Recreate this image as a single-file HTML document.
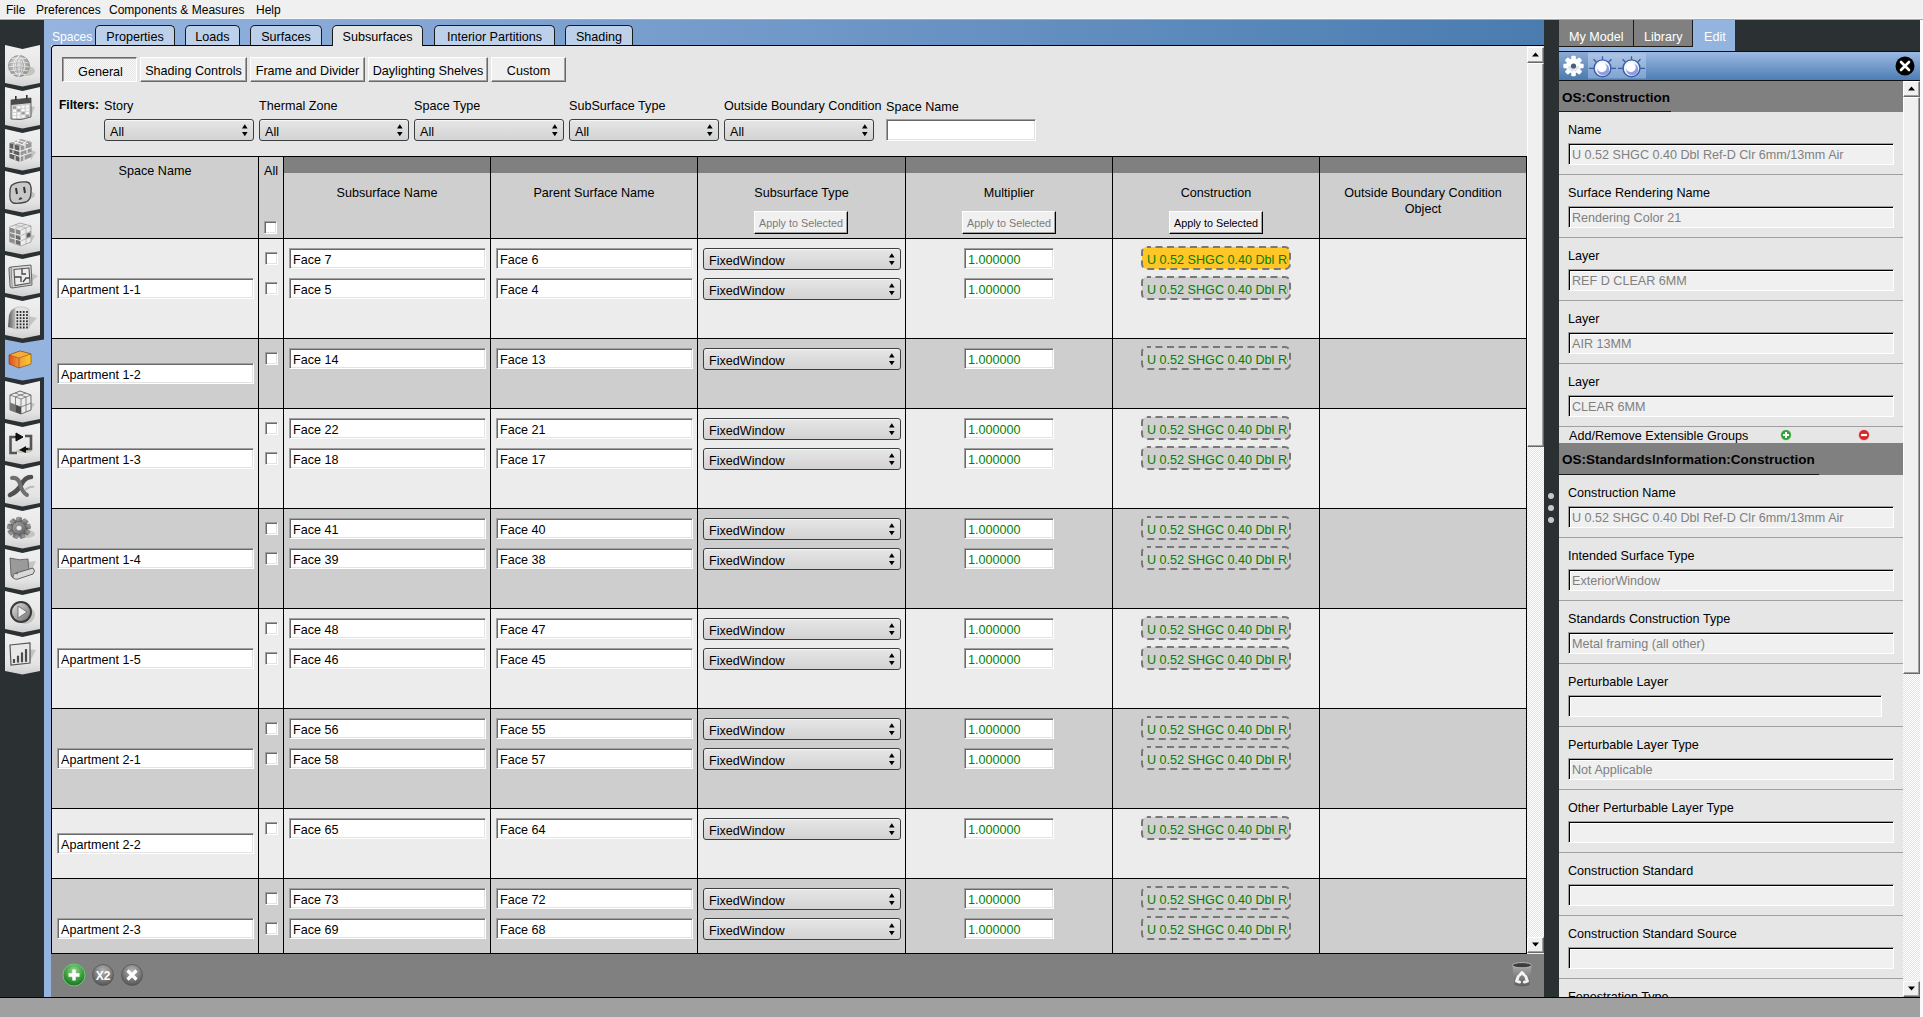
<!DOCTYPE html>
<html><head><meta charset="utf-8"><style>
html,body{margin:0;padding:0;}
body{width:1923px;height:1017px;overflow:hidden;position:relative;background:#f0f0f0;font-family:"Liberation Sans", sans-serif;font-size:12.6px;color:#000;}
.r,.t{position:absolute;}
.t{white-space:nowrap;}
.btn{background:#f0f0f0;border-top:1px solid #fff;border-left:1px solid #fff;border-right:1px solid #696969;border-bottom:1px solid #696969;box-shadow:inset -1px -1px 0 #a0a0a0;box-sizing:border-box;}
.btnp{background-color:#f8f8f8;background-image:linear-gradient(45deg,#e6e6e6 25%,transparent 25%,transparent 75%,#e6e6e6 75%),linear-gradient(45deg,#e6e6e6 25%,transparent 25%,transparent 75%,#e6e6e6 75%);background-size:2px 2px;background-position:0 0,1px 1px;border-top:1px solid #696969;border-left:1px solid #696969;border-right:1px solid #fff;border-bottom:1px solid #fff;box-shadow:inset 1px 1px 0 #a0a0a0;box-sizing:border-box;}
.combo{background:linear-gradient(#e6e6e6,#d3d3d3);border:1px solid #3a3f41;border-radius:3px;box-sizing:border-box;box-shadow:inset 0 1px 0 #f6f6f6;}
.edit{background:#fff;border-top:1px solid #a0a0a0;border-left:1px solid #a0a0a0;border-right:1px solid #fff;border-bottom:1px solid #fff;box-shadow:inset 1px 1px 0 #696969,inset -1px -1px 0 #e3e3e3;box-sizing:border-box;}
.chk{background:#fff;border-top:1px solid #a0a0a0;border-left:1px solid #a0a0a0;border-right:1px solid #fff;border-bottom:1px solid #fff;box-shadow:inset 1px 1px 0 #696969,inset -1px -1px 0 #e3e3e3;box-sizing:border-box;}
.cbtn{border:2px solid transparent;box-sizing:border-box;overflow:hidden;color:#008000;font-size:12.6px;line-height:24px;padding-left:4px;white-space:nowrap;}
.cbtn span{display:block;width:141px;overflow:hidden;}
.cbtn.sel{background:#ffc726;}
.pedit{background:#f0f0f0;border-top:1px solid #a0a0a0;border-left:1px solid #a0a0a0;border-right:1px solid #fff;border-bottom:1px solid #fff;box-shadow:inset 1px 1px 0 #000,inset 2px 2px 0 #fff;box-sizing:border-box;}
.sbbtn{background:#f0f0f0;border-top:1px solid #fff;border-left:1px solid #fff;border-right:1px solid #696969;border-bottom:1px solid #696969;box-shadow:inset -1px -1px 0 #a0a0a0;box-sizing:border-box;}
.dith{background-color:#fff;background-image:linear-gradient(45deg,#e3e3e3 25%,transparent 25%,transparent 75%,#e3e3e3 75%),linear-gradient(45deg,#e3e3e3 25%,transparent 25%,transparent 75%,#e3e3e3 75%);background-size:2px 2px;background-position:0 0,1px 1px;}
</style></head><body>
<div class="r" style="left:0px;top:0px;width:1923px;height:20px;background:#f0f0f0;"></div>
<div class="r" style="left:0px;top:18px;width:1923px;height:1px;background:#f8f8f8;"></div>
<div class="r" style="left:0px;top:19px;width:1923px;height:1px;background:#aaa6a2;"></div>
<div class="t" style="left:6px;top:3.44px;font-size:12px;line-height:14px;color:#000;">File</div>
<div class="t" style="left:36px;top:3.44px;font-size:12px;line-height:14px;color:#000;">Preferences</div>
<div class="t" style="left:109px;top:3.44px;font-size:12px;line-height:14px;color:#000;">Components &amp; Measures</div>
<div class="t" style="left:256px;top:3.44px;font-size:12px;line-height:14px;color:#000;">Help</div>
<div class="r" style="left:0px;top:997px;width:1923px;height:1px;background:#000;"></div>
<div class="r" style="left:0px;top:998px;width:1923px;height:19px;background:#a0a0a0;"></div>
<div class="r" style="left:0px;top:20px;width:44px;height:977px;background:#2b3033;"></div>
<div class="r" style="left:44px;top:20px;width:7px;height:977px;background:#94b3df;"></div>
<svg class="r" style="left:0;top:20px" width="51" height="977" viewBox="0 20 51 977"><defs><linearGradient id="tabg" x1="0" y1="0" x2="0" y2="1"><stop offset="0" stop-color="#f0f0f0"/><stop offset="0.75" stop-color="#e4e4e4"/><stop offset="1" stop-color="#cfcfcf"/></linearGradient><linearGradient id="orng" x1="0" x2="1"><stop offset="0" stop-color="#e64a12"/><stop offset="0.5" stop-color="#f0a040"/><stop offset="1" stop-color="#ffc820"/></linearGradient><radialGradient id="glb" cx="40%" cy="35%" r="70%"><stop offset="0" stop-color="#d8d8d8"/><stop offset="1" stop-color="#8c8c8c"/></radialGradient></defs><path d="M5 45L22.5 49L40 45V83L22.5 86.5L5 83Z" fill="url(#tabg)"/><path d="M5 87L22.5 91L40 87V125L22.5 128.5L5 125Z" fill="url(#tabg)"/><path d="M5 129L22.5 133L40 129V167L22.5 170.5L5 167Z" fill="url(#tabg)"/><path d="M5 171L22.5 175L40 171V209L22.5 212.5L5 209Z" fill="url(#tabg)"/><path d="M5 213L22.5 217L40 213V251L22.5 254.5L5 251Z" fill="url(#tabg)"/><path d="M5 255L22.5 259L40 255V293L22.5 296.5L5 293Z" fill="url(#tabg)"/><path d="M5 297L22.5 301L40 297V335L22.5 338.5L5 335Z" fill="url(#tabg)"/><path d="M5 339.5L22.5 343L44 339.5V377L22.5 380.5L5 377Z" fill="#94b3df"/><path d="M5 381L22.5 385L40 381V419L22.5 422.5L5 419Z" fill="url(#tabg)"/><path d="M5 423L22.5 427L40 423V461L22.5 464.5L5 461Z" fill="url(#tabg)"/><path d="M5 465L22.5 469L40 465V503L22.5 506.5L5 503Z" fill="url(#tabg)"/><path d="M5 507L22.5 511L40 507V545L22.5 548.5L5 545Z" fill="url(#tabg)"/><path d="M5 549L22.5 553L40 549V587L22.5 590.5L5 587Z" fill="url(#tabg)"/><path d="M5 591L22.5 595L40 591V629L22.5 632.5L5 629Z" fill="url(#tabg)"/><path d="M5 633L22.5 637L40 633V671L22.5 674.5L5 671Z" fill="url(#tabg)"/><ellipse cx="27" cy="71" rx="8" ry="5" fill="#c2c6bd"/><circle cx="19" cy="66" r="10.5" fill="url(#glb)" stroke="#8e8e8e" stroke-width="0.9"/><path d="M9.5 63Q19 61 28.5 63M8.6 67Q19 65 29.4 67M9.5 71Q19 69 28.5 71M12 58.5Q19 57 26 58.5M12 74.5Q19 73 26 74.5M19 55.5V76.5M19 55.5Q12 66 19 76.5M19 55.5Q26 66 19 76.5M19 55.5Q7 66 19 76.5M19 55.5Q31 66 19 76.5" stroke="#f2f2f2" stroke-width="0.9" fill="none"/><path d="M9.5 63Q19 61 28.5 63M8.6 67Q19 65 29.4 67M9.5 71Q19 69 28.5 71M19 55.5Q12 66 19 76.5M19 55.5Q26 66 19 76.5" stroke="#8a8a8a" stroke-width="0.4" fill="none" transform="translate(0.6,0.6)"/><path d="M29 106L35 107L30 118Z" fill="#c2c6bd"/><path d="M11 100L31 98V117Q21 121 11 119Z" fill="#d0d0d0" stroke="#555" stroke-width="0.9"/><path d="M11 100L31 98V103L11 105Z" fill="#4a4a4a"/><rect x="15" y="96" width="1.6" height="4" fill="#333"/><rect x="26" y="95" width="1.6" height="4" fill="#333"/><rect x="13.0" y="106.5" width="3" height="2.2" fill="#9a9a9a"/><rect x="13.0" y="109.7" width="3" height="2.2" fill="#fafafa"/><rect x="13.0" y="112.9" width="3" height="2.2" fill="#fafafa"/><rect x="13.0" y="116.1" width="3" height="2.2" fill="#fafafa"/><rect x="17.3" y="106.1" width="3" height="2.2" fill="#fafafa"/><rect x="17.3" y="109.3" width="3" height="2.2" fill="#9a9a9a"/><rect x="17.3" y="112.5" width="3" height="2.2" fill="#fafafa"/><rect x="17.3" y="115.69999999999999" width="3" height="2.2" fill="#fafafa"/><rect x="21.6" y="105.7" width="3" height="2.2" fill="#fafafa"/><rect x="21.6" y="108.9" width="3" height="2.2" fill="#fafafa"/><rect x="21.6" y="112.10000000000001" width="3" height="2.2" fill="#9a9a9a"/><rect x="21.6" y="115.3" width="3" height="2.2" fill="#fafafa"/><rect x="25.9" y="105.3" width="3" height="2.2" fill="#fafafa"/><rect x="25.9" y="108.5" width="3" height="2.2" fill="#fafafa"/><rect x="25.9" y="111.7" width="3" height="2.2" fill="#fafafa"/><rect x="25.9" y="114.89999999999999" width="3" height="2.2" fill="#9a9a9a"/><path d="M31 150L36 152L31 160Z" fill="#c2c6bd"/><path d="M9.5 143L21 139L31.5 142L20 146Z" fill="#a0a0a0"/><path d="M9.5 143L20 146V162L9.5 158Z" fill="#5e5e5e"/><path d="M20 146L31.5 142V157L20 162Z" fill="#979797"/><path d="M9.5 148.5L20 151.5L31.5 147.5M9.5 153L20 156.5L31.5 152.5M20 146V162M14 144.5V149.5M13 150.5V155M15 154.5V160M25 144V149M27 148V153M24 153.5V160.5M13 141.5L24.5 145.5M17 140L28 143.5M15 144L19 140.5M23 144.5L26.5 141" stroke="#f4f4f4" stroke-width="1.1" fill="none"/><ellipse cx="28" cy="195" rx="7" ry="4" fill="#c2c6bd"/><path d="M12 185Q18 181 27 182Q32 183 31 192Q31 200 26 202Q18 204 13 203Q9 201 10 192Q10 187 12 185Z" fill="#c8c8c8" stroke="#444" stroke-width="1.3"/><path d="M16 188L17 194M24 187L25 193" stroke="#333" stroke-width="2"/><path d="M18.5 200Q20 195 22.5 199Z" fill="#333"/><path d="M30 234L35 236L30 244Z" fill="#c2c6bd"/><path d="M9.5 227L20 223L31 226L21 230Z" fill="#e6e6e6"/><path d="M9.5 227L21 230V246L9.5 242Z" fill="#8a8a8a"/><path d="M21 230L31 226V242L21 246Z" fill="#ececec"/><path d="M26 233L31 231V237L26 239Z" fill="#5a5a5a"/><path d="M15.2 235.5L21 237.3V246L15.2 244Z" fill="#6a6a6a"/><path d="M9.5 227L20 223L31 226V242L21 246L9.5 242ZM9.5 227L21 230L31 226M21 230V246M15.2 228.5V244M26 228V244M9.5 232.5L21 235.5L31 231.5M9.5 237.5L21 240.8L31 236.8M15 225L26 228M25.5 224.5L15 228.5" stroke="#f8f8f8" stroke-width="0.9" fill="none"/><path d="M26 228V244M21 235.5L31 231.5M21 240.8L31 236.8M15 225L26 228M25.5 224.5L15 228.5M21 230L31 226" stroke="#a8a8a8" stroke-width="0.8" fill="none"/><path d="M9.5 227L20 223L31 226V242L21 246L9.5 242Z" stroke="#777" stroke-width="0.6" fill="none"/><path d="M31 273L38 276L31 282Z" fill="#c2c6bd"/><path d="M11 267L31 265L32 285L12 288Z" fill="#d8d8d8" stroke="#666" stroke-width="1"/><path d="M11 267Q8 267 9 270L10 286Q10 288 12 288" fill="#bdbdbd" stroke="#666" stroke-width="1"/><path d="M14 269.5L29 268L30 283L15 285.5Z" fill="#ececec" stroke="#555" stroke-width="1.1"/><path d="M22 268.5V274H26M15 277H21V282M30 278H26L23 282" stroke="#444" stroke-width="1.3" fill="none"/><path d="M28 316L37 318L28 328Z" fill="#c2c6bd"/><defs><linearGradient id="bld" x1="0" x2="1"><stop offset="0" stop-color="#5a5a5a"/><stop offset="1" stop-color="#b8b8b8"/></linearGradient></defs><path d="M9 315Q11 309 15 308L15 329L8 327Z" fill="url(#bld)"/><path d="M15 308Q21 305 29 309V328L15 329Z" fill="#e2e2e2" stroke="#aaa" stroke-width="0.5"/><rect x="16.5" y="311.0" width="1.7" height="1.9" fill="#2a2a2a"/><rect x="16.5" y="314.1" width="1.7" height="1.9" fill="#2a2a2a"/><rect x="16.5" y="317.2" width="1.7" height="1.9" fill="#2a2a2a"/><rect x="16.5" y="320.3" width="1.7" height="1.9" fill="#2a2a2a"/><rect x="16.5" y="323.4" width="1.7" height="1.9" fill="#2a2a2a"/><rect x="16.5" y="326.5" width="1.7" height="1.9" fill="#2a2a2a"/><rect x="19.7" y="311.0" width="1.7" height="1.9" fill="#2a2a2a"/><rect x="19.7" y="314.1" width="1.7" height="1.9" fill="#2a2a2a"/><rect x="19.7" y="317.2" width="1.7" height="1.9" fill="#2a2a2a"/><rect x="19.7" y="320.3" width="1.7" height="1.9" fill="#2a2a2a"/><rect x="19.7" y="323.4" width="1.7" height="1.9" fill="#2a2a2a"/><rect x="19.7" y="326.5" width="1.7" height="1.9" fill="#2a2a2a"/><rect x="22.9" y="311.0" width="1.7" height="1.9" fill="#2a2a2a"/><rect x="22.9" y="314.1" width="1.7" height="1.9" fill="#2a2a2a"/><rect x="22.9" y="317.2" width="1.7" height="1.9" fill="#2a2a2a"/><rect x="22.9" y="320.3" width="1.7" height="1.9" fill="#2a2a2a"/><rect x="22.9" y="323.4" width="1.7" height="1.9" fill="#2a2a2a"/><rect x="22.9" y="326.5" width="1.7" height="1.9" fill="#2a2a2a"/><rect x="26.1" y="311.0" width="1.7" height="1.9" fill="#2a2a2a"/><rect x="26.1" y="314.1" width="1.7" height="1.9" fill="#2a2a2a"/><rect x="26.1" y="317.2" width="1.7" height="1.9" fill="#2a2a2a"/><rect x="26.1" y="320.3" width="1.7" height="1.9" fill="#2a2a2a"/><rect x="26.1" y="323.4" width="1.7" height="1.9" fill="#2a2a2a"/><rect x="26.1" y="326.5" width="1.7" height="1.9" fill="#2a2a2a"/><path d="M27 359L32 361L28 366Z" fill="#7f9cc8"/><path d="M9 355L20 351L31 354V364L19 368L9 364Z" fill="url(#orng)" stroke="#7a4010" stroke-width="0.6"/><path d="M9 355L19 358L31 354L20 351Z" fill="#f5ac3a" stroke="#7a4010" stroke-width="0.5"/><path d="M19 358V368" stroke="#8a4a18" stroke-width="0.7"/><path d="M29 402L35 404L29 412Z" fill="#c2c6bd"/><path d="M10 395L20 391L31 395V410L21 414L10 410Z" fill="#ececec" stroke="#606060" stroke-width="0.9"/><path d="M10 395L21 399L31 395M21 399V414M15.5 397V412M26 397V412M10 403L21 407L31 403M15 393L26 397M26 393L15 397" stroke="#707070" stroke-width="0.8" fill="none"/><path d="M15.5 405L21 407V414L15.5 412Z" fill="#4a4a4a"/><path d="M10 403L15.5 405V412L10 410Z" fill="#777"/><ellipse cx="24" cy="451" rx="8" ry="2" fill="#c2c6bd"/><path d="M16 437H10.5V453H17" stroke="#555" stroke-width="2.6" fill="none"/><path d="M25 436H31V449H25" stroke="#555" stroke-width="2.6" fill="none"/><path d="M15 437H18M16 433L23 437L16 441Z" fill="#111" stroke="#111" stroke-width="1"/><path d="M26 453L19 450L26 446Z" fill="#111"/><path d="M25 449H28" stroke="#111" stroke-width="2"/><path d="M25 490Q30 486 34 487" stroke="#b8bcb4" stroke-width="2" fill="none"/><path d="M10 495Q17 492 21 485Q25 477 31 477" stroke="#505050" stroke-width="4.6" fill="none" stroke-linecap="round"/><path d="M12 478Q18 477 20 484Q22 492 27 495" stroke="#707070" stroke-width="4" fill="none" stroke-linecap="round"/><ellipse cx="27" cy="534" rx="8" ry="4" fill="#c2c6bd"/><defs><linearGradient id="gearg" x1="0" y1="0" x2="1" y2="1"><stop offset="0" stop-color="#b0b0b0"/><stop offset="1" stop-color="#5a5a5a"/></linearGradient></defs><g transform="translate(19,528) scale(1,0.92)" fill="url(#gearg)" stroke="#555" stroke-width="0.5"><circle r="8.5"/><rect x="-2.6" y="-11.5" width="5.2" height="5" rx="1" transform="rotate(0)"/><rect x="-2.6" y="-11.5" width="5.2" height="5" rx="1" transform="rotate(40)"/><rect x="-2.6" y="-11.5" width="5.2" height="5" rx="1" transform="rotate(80)"/><rect x="-2.6" y="-11.5" width="5.2" height="5" rx="1" transform="rotate(120)"/><rect x="-2.6" y="-11.5" width="5.2" height="5" rx="1" transform="rotate(160)"/><rect x="-2.6" y="-11.5" width="5.2" height="5" rx="1" transform="rotate(200)"/><rect x="-2.6" y="-11.5" width="5.2" height="5" rx="1" transform="rotate(240)"/><rect x="-2.6" y="-11.5" width="5.2" height="5" rx="1" transform="rotate(280)"/><rect x="-2.6" y="-11.5" width="5.2" height="5" rx="1" transform="rotate(320)"/><circle r="3" fill="#e8e8e8"/></g><path d="M28 562L36 561L30 574Z" fill="#c2c6bd"/><path d="M10 558Q20 561 28 559L29 572Q22 574 16 578Q12 579 11 575Z" fill="#9a9a9a" stroke="#555" stroke-width="0.8"/><path d="M16 573L33 568Q36 571 33 574L18 579Q13 580 13 576Q14 572 18 574" fill="#d8d8d8" stroke="#555" stroke-width="0.9"/><ellipse cx="25" cy="615" rx="10" ry="9" fill="#c2c6bd"/><defs><linearGradient id="playg" x1="0" y1="0" x2="1" y2="1"><stop offset="0" stop-color="#e0e0e0"/><stop offset="1" stop-color="#707070"/></linearGradient></defs><circle cx="21" cy="612" r="11" fill="#3a3a3a"/><circle cx="21" cy="612" r="9" fill="url(#playg)"/><path d="M18 606L27 612L18 618Z" fill="#f0f0f0" stroke="#666" stroke-width="0.8"/><path d="M28 649L36 650L29 663Z" fill="#c2c6bd"/><path d="M10 645L30 643V663L11 665Z" fill="#e8e8e8" stroke="#555" stroke-width="1.2"/><path d="M14 663.0V659.0" stroke="#4a4a4a" stroke-width="2.2"/><path d="M18 662.6V655.7" stroke="#4a4a4a" stroke-width="2.2"/><path d="M22 662.2V652.4" stroke="#4a4a4a" stroke-width="2.2"/><path d="M26 661.8V649.1" stroke="#4a4a4a" stroke-width="2.2"/></svg>
<div class="r" style="left:44px;top:20px;width:1500px;height:25px;background:linear-gradient(to right,#96b4e0,#4a7cb0);"></div>
<div class="t" style="left:52px;top:29.91px;font-size:12.1px;line-height:15px;color:#fff;">Spaces</div>
<div class="r" style="left:51px;top:45px;width:1493px;height:908px;background:#e6e6e6;border-top:1px solid #000;border-left:1px solid #000;border-top-left-radius:4px;box-sizing:border-box;"></div>
<div class="r" style="left:95px;top:25px;width:80px;height:20px;background:#bdd0ea;border:1px solid #1a1a1a;border-bottom:none;border-radius:5px 5px 0 0;box-sizing:border-box;"></div>
<div class="t" style="left:95px;top:29.73px;font-size:12.6px;line-height:15px;color:#000;width:80px;text-align:center;">Properties</div>
<div class="r" style="left:185px;top:25px;width:55px;height:20px;background:#bdd0ea;border:1px solid #1a1a1a;border-bottom:none;border-radius:5px 5px 0 0;box-sizing:border-box;"></div>
<div class="t" style="left:185px;top:29.73px;font-size:12.6px;line-height:15px;color:#000;width:55px;text-align:center;">Loads</div>
<div class="r" style="left:250px;top:25px;width:72px;height:20px;background:#bdd0ea;border:1px solid #1a1a1a;border-bottom:none;border-radius:5px 5px 0 0;box-sizing:border-box;"></div>
<div class="t" style="left:250px;top:29.73px;font-size:12.6px;line-height:15px;color:#000;width:72px;text-align:center;">Surfaces</div>
<div class="r" style="left:332px;top:25px;width:91px;height:21px;background:#e6e6e6;border:1px solid #1a1a1a;border-bottom:none;border-radius:5px 5px 0 0;box-sizing:border-box;"></div>
<div class="t" style="left:332px;top:29.73px;font-size:12.6px;line-height:15px;color:#000;width:91px;text-align:center;">Subsurfaces</div>
<div class="r" style="left:434px;top:25px;width:121px;height:20px;background:#bdd0ea;border:1px solid #1a1a1a;border-bottom:none;border-radius:5px 5px 0 0;box-sizing:border-box;"></div>
<div class="t" style="left:434px;top:29.73px;font-size:12.6px;line-height:15px;color:#000;width:121px;text-align:center;">Interior Partitions</div>
<div class="r" style="left:565px;top:25px;width:68px;height:20px;background:#bdd0ea;border:1px solid #1a1a1a;border-bottom:none;border-radius:5px 5px 0 0;box-sizing:border-box;"></div>
<div class="t" style="left:565px;top:29.73px;font-size:12.6px;line-height:15px;color:#000;width:68px;text-align:center;">Shading</div>
<div class="r btnp" style="left:62px;top:57px;width:75px;height:25px;"></div>
<div class="t" style="left:63px;top:64.73px;font-size:12.6px;line-height:15px;color:#000;width:75px;text-align:center;">General</div>
<div class="r btn" style="left:140px;top:57px;width:107px;height:25px;"></div>
<div class="t" style="left:140px;top:63.73px;font-size:12.6px;line-height:15px;color:#000;width:107px;text-align:center;">Shading Controls</div>
<div class="r btn" style="left:250px;top:57px;width:115px;height:25px;"></div>
<div class="t" style="left:250px;top:63.73px;font-size:12.6px;line-height:15px;color:#000;width:115px;text-align:center;">Frame and Divider</div>
<div class="r btn" style="left:368px;top:57px;width:120px;height:25px;"></div>
<div class="t" style="left:368px;top:63.73px;font-size:12.6px;line-height:15px;color:#000;width:120px;text-align:center;">Daylighting Shelves</div>
<div class="r btn" style="left:491px;top:57px;width:75px;height:25px;"></div>
<div class="t" style="left:491px;top:63.73px;font-size:12.6px;line-height:15px;color:#000;width:75px;text-align:center;">Custom</div>
<div class="t" style="left:59px;top:98.44px;font-size:12px;line-height:14px;color:#000;font-weight:bold;">Filters:</div>
<div class="t" style="left:104px;top:98.73px;font-size:12.6px;line-height:15px;color:#000;">Story</div>
<div class="r combo" style="left:104px;top:119px;width:150px;height:22px;"></div>
<div class="t" style="left:110px;top:124.73px;font-size:12.6px;line-height:15px;color:#000;">All</div>
<svg class="r" style="left:240px;top:123px" width="9" height="14"><path d="M4.8 1.2L7.6 5.6H2Z M2 9H7.6L4.8 13.2Z" fill="#000"/></svg>
<div class="t" style="left:259px;top:98.73px;font-size:12.6px;line-height:15px;color:#000;">Thermal Zone</div>
<div class="r combo" style="left:259px;top:119px;width:150px;height:22px;"></div>
<div class="t" style="left:265px;top:124.73px;font-size:12.6px;line-height:15px;color:#000;">All</div>
<svg class="r" style="left:395px;top:123px" width="9" height="14"><path d="M4.8 1.2L7.6 5.6H2Z M2 9H7.6L4.8 13.2Z" fill="#000"/></svg>
<div class="t" style="left:414px;top:98.73px;font-size:12.6px;line-height:15px;color:#000;">Space Type</div>
<div class="r combo" style="left:414px;top:119px;width:150px;height:22px;"></div>
<div class="t" style="left:420px;top:124.73px;font-size:12.6px;line-height:15px;color:#000;">All</div>
<svg class="r" style="left:550px;top:123px" width="9" height="14"><path d="M4.8 1.2L7.6 5.6H2Z M2 9H7.6L4.8 13.2Z" fill="#000"/></svg>
<div class="t" style="left:569px;top:98.73px;font-size:12.6px;line-height:15px;color:#000;">SubSurface Type</div>
<div class="r combo" style="left:569px;top:119px;width:150px;height:22px;"></div>
<div class="t" style="left:575px;top:124.73px;font-size:12.6px;line-height:15px;color:#000;">All</div>
<svg class="r" style="left:705px;top:123px" width="9" height="14"><path d="M4.8 1.2L7.6 5.6H2Z M2 9H7.6L4.8 13.2Z" fill="#000"/></svg>
<div class="t" style="left:724px;top:98.73px;font-size:12.6px;line-height:15px;color:#000;">Outside Boundary Condition</div>
<div class="r combo" style="left:724px;top:119px;width:150px;height:22px;"></div>
<div class="t" style="left:730px;top:124.73px;font-size:12.6px;line-height:15px;color:#000;">All</div>
<svg class="r" style="left:860px;top:123px" width="9" height="14"><path d="M4.8 1.2L7.6 5.6H2Z M2 9H7.6L4.8 13.2Z" fill="#000"/></svg>
<div class="t" style="left:886px;top:99.73px;font-size:12.6px;line-height:15px;color:#000;">Space Name</div>
<div class="r edit" style="left:886px;top:119px;width:150px;height:22px;"></div>
<div class="r" style="left:52px;top:157px;width:1474px;height:81px;background:#cfcfcf;"></div>
<div class="r" style="left:284px;top:157px;width:1242px;height:16px;background:#808080;"></div>
<div class="t" style="left:52px;top:163.73px;font-size:12.6px;line-height:15px;color:#000;width:206px;text-align:center;">Space Name</div>
<div class="t" style="left:264px;top:163.73px;font-size:12.6px;line-height:15px;color:#000;">All</div>
<div class="r chk" style="left:264px;top:221px;width:13px;height:13px;"></div>
<div class="t" style="left:284px;top:185.73px;font-size:12.6px;line-height:15px;color:#000;width:206px;text-align:center;">Subsurface Name</div>
<div class="t" style="left:491px;top:185.73px;font-size:12.6px;line-height:15px;color:#000;width:206px;text-align:center;">Parent Surface Name</div>
<div class="t" style="left:698px;top:185.73px;font-size:12.6px;line-height:15px;color:#000;width:207px;text-align:center;">Subsurface Type</div>
<div class="t" style="left:906px;top:185.73px;font-size:12.6px;line-height:15px;color:#000;width:206px;text-align:center;">Multiplier</div>
<div class="t" style="left:1113px;top:185.73px;font-size:12.6px;line-height:15px;color:#000;width:206px;text-align:center;">Construction</div>
<div class="t" style="left:1320px;top:185.73px;font-size:12.6px;line-height:15px;color:#000;width:206px;text-align:center;">Outside Boundary Condition</div>
<div class="t" style="left:1320px;top:201.73px;font-size:12.6px;line-height:15px;color:#000;width:206px;text-align:center;">Object</div>
<div class="r btn" style="left:754px;top:211px;width:94px;height:23px;border-right-color:#000;border-bottom-color:#000;"></div>
<div class="t" style="left:754px;top:217.36px;font-size:10.8px;line-height:13px;color:#7a7a7a;width:94px;text-align:center;">Apply to Selected</div>
<div class="r btn" style="left:962px;top:211px;width:94px;height:23px;border-right-color:#000;border-bottom-color:#000;"></div>
<div class="t" style="left:962px;top:217.36px;font-size:10.8px;line-height:13px;color:#7a7a7a;width:94px;text-align:center;">Apply to Selected</div>
<div class="r btn" style="left:1169px;top:211px;width:94px;height:23px;border-right-color:#000;border-bottom-color:#000;"></div>
<div class="t" style="left:1169px;top:217.36px;font-size:10.8px;line-height:13px;color:#000;width:94px;text-align:center;">Apply to Selected</div>
<div class="r" style="left:52px;top:239px;width:1474px;height:99px;background:#ececec;"></div>
<div class="r edit" style="left:57px;top:278px;width:197px;height:21px;"></div>
<div class="t" style="left:61px;top:282.73px;font-size:12.6px;line-height:15px;color:#000;">Apartment 1-1</div>
<div class="r chk" style="left:265px;top:252px;width:13px;height:13px;"></div>
<div class="r edit" style="left:289px;top:248px;width:197px;height:21px;"></div>
<div class="t" style="left:293px;top:252.73px;font-size:12.6px;line-height:15px;color:#000;">Face 7</div>
<div class="r edit" style="left:496px;top:248px;width:197px;height:21px;"></div>
<div class="t" style="left:500px;top:252.73px;font-size:12.6px;line-height:15px;color:#000;">Face 6</div>
<div class="r combo" style="left:703px;top:248px;width:198px;height:22px;"></div>
<div class="t" style="left:709px;top:253.73px;font-size:12.6px;line-height:15px;color:#000;">FixedWindow</div>
<svg class="r" style="left:887px;top:252px" width="9" height="14"><path d="M4.8 1.2L7.6 5.6H2Z M2 9H7.6L4.8 13.2Z" fill="#000"/></svg>
<div class="r edit" style="left:964px;top:248px;width:90px;height:21px;"></div>
<div class="t" style="left:968px;top:252.73px;font-size:12.6px;line-height:15px;color:#008000;">1.000000</div>
<svg class="r" style="left:1141px;top:246px" width="150" height="24"><rect x="1" y="1" width="148" height="22" rx="5" fill="#ffc726" stroke="#787878" stroke-width="2" stroke-dasharray="7 4.5" stroke-dashoffset="3"/></svg>
<div class="r cbtn" style="left:1141px;top:246px;width:150px;height:24px;"><span>U 0.52 SHGC 0.40 Dbl Ref-D Clr 6mm/13mm Air</span></div>
<div class="r chk" style="left:265px;top:282px;width:13px;height:13px;"></div>
<div class="r edit" style="left:289px;top:278px;width:197px;height:21px;"></div>
<div class="t" style="left:293px;top:282.73px;font-size:12.6px;line-height:15px;color:#000;">Face 5</div>
<div class="r edit" style="left:496px;top:278px;width:197px;height:21px;"></div>
<div class="t" style="left:500px;top:282.73px;font-size:12.6px;line-height:15px;color:#000;">Face 4</div>
<div class="r combo" style="left:703px;top:278px;width:198px;height:22px;"></div>
<div class="t" style="left:709px;top:283.73px;font-size:12.6px;line-height:15px;color:#000;">FixedWindow</div>
<svg class="r" style="left:887px;top:282px" width="9" height="14"><path d="M4.8 1.2L7.6 5.6H2Z M2 9H7.6L4.8 13.2Z" fill="#000"/></svg>
<div class="r edit" style="left:964px;top:278px;width:90px;height:21px;"></div>
<div class="t" style="left:968px;top:282.73px;font-size:12.6px;line-height:15px;color:#008000;">1.000000</div>
<svg class="r" style="left:1141px;top:276px" width="150" height="24"><rect x="1" y="1" width="148" height="22" rx="5" fill="#d0d0d0" stroke="#787878" stroke-width="2" stroke-dasharray="7 4.5" stroke-dashoffset="3"/></svg>
<div class="r cbtn" style="left:1141px;top:276px;width:150px;height:24px;"><span>U 0.52 SHGC 0.40 Dbl Ref-D Clr 6mm/13mm Air</span></div>
<div class="r" style="left:52px;top:339px;width:1474px;height:69px;background:#cecece;"></div>
<div class="r edit" style="left:57px;top:363px;width:197px;height:21px;"></div>
<div class="t" style="left:61px;top:367.73px;font-size:12.6px;line-height:15px;color:#000;">Apartment 1-2</div>
<div class="r chk" style="left:265px;top:352px;width:13px;height:13px;"></div>
<div class="r edit" style="left:289px;top:348px;width:197px;height:21px;"></div>
<div class="t" style="left:293px;top:352.73px;font-size:12.6px;line-height:15px;color:#000;">Face 14</div>
<div class="r edit" style="left:496px;top:348px;width:197px;height:21px;"></div>
<div class="t" style="left:500px;top:352.73px;font-size:12.6px;line-height:15px;color:#000;">Face 13</div>
<div class="r combo" style="left:703px;top:348px;width:198px;height:22px;"></div>
<div class="t" style="left:709px;top:353.73px;font-size:12.6px;line-height:15px;color:#000;">FixedWindow</div>
<svg class="r" style="left:887px;top:352px" width="9" height="14"><path d="M4.8 1.2L7.6 5.6H2Z M2 9H7.6L4.8 13.2Z" fill="#000"/></svg>
<div class="r edit" style="left:964px;top:348px;width:90px;height:21px;"></div>
<div class="t" style="left:968px;top:352.73px;font-size:12.6px;line-height:15px;color:#008000;">1.000000</div>
<svg class="r" style="left:1141px;top:346px" width="150" height="24"><rect x="1" y="1" width="148" height="22" rx="5" fill="#d0d0d0" stroke="#787878" stroke-width="2" stroke-dasharray="7 4.5" stroke-dashoffset="3"/></svg>
<div class="r cbtn" style="left:1141px;top:346px;width:150px;height:24px;"><span>U 0.52 SHGC 0.40 Dbl Ref-D Clr 6mm/13mm Air</span></div>
<div class="r" style="left:52px;top:409px;width:1474px;height:99px;background:#ececec;"></div>
<div class="r edit" style="left:57px;top:448px;width:197px;height:21px;"></div>
<div class="t" style="left:61px;top:452.73px;font-size:12.6px;line-height:15px;color:#000;">Apartment 1-3</div>
<div class="r chk" style="left:265px;top:422px;width:13px;height:13px;"></div>
<div class="r edit" style="left:289px;top:418px;width:197px;height:21px;"></div>
<div class="t" style="left:293px;top:422.73px;font-size:12.6px;line-height:15px;color:#000;">Face 22</div>
<div class="r edit" style="left:496px;top:418px;width:197px;height:21px;"></div>
<div class="t" style="left:500px;top:422.73px;font-size:12.6px;line-height:15px;color:#000;">Face 21</div>
<div class="r combo" style="left:703px;top:418px;width:198px;height:22px;"></div>
<div class="t" style="left:709px;top:423.73px;font-size:12.6px;line-height:15px;color:#000;">FixedWindow</div>
<svg class="r" style="left:887px;top:422px" width="9" height="14"><path d="M4.8 1.2L7.6 5.6H2Z M2 9H7.6L4.8 13.2Z" fill="#000"/></svg>
<div class="r edit" style="left:964px;top:418px;width:90px;height:21px;"></div>
<div class="t" style="left:968px;top:422.73px;font-size:12.6px;line-height:15px;color:#008000;">1.000000</div>
<svg class="r" style="left:1141px;top:416px" width="150" height="24"><rect x="1" y="1" width="148" height="22" rx="5" fill="#d0d0d0" stroke="#787878" stroke-width="2" stroke-dasharray="7 4.5" stroke-dashoffset="3"/></svg>
<div class="r cbtn" style="left:1141px;top:416px;width:150px;height:24px;"><span>U 0.52 SHGC 0.40 Dbl Ref-D Clr 6mm/13mm Air</span></div>
<div class="r chk" style="left:265px;top:452px;width:13px;height:13px;"></div>
<div class="r edit" style="left:289px;top:448px;width:197px;height:21px;"></div>
<div class="t" style="left:293px;top:452.73px;font-size:12.6px;line-height:15px;color:#000;">Face 18</div>
<div class="r edit" style="left:496px;top:448px;width:197px;height:21px;"></div>
<div class="t" style="left:500px;top:452.73px;font-size:12.6px;line-height:15px;color:#000;">Face 17</div>
<div class="r combo" style="left:703px;top:448px;width:198px;height:22px;"></div>
<div class="t" style="left:709px;top:453.73px;font-size:12.6px;line-height:15px;color:#000;">FixedWindow</div>
<svg class="r" style="left:887px;top:452px" width="9" height="14"><path d="M4.8 1.2L7.6 5.6H2Z M2 9H7.6L4.8 13.2Z" fill="#000"/></svg>
<div class="r edit" style="left:964px;top:448px;width:90px;height:21px;"></div>
<div class="t" style="left:968px;top:452.73px;font-size:12.6px;line-height:15px;color:#008000;">1.000000</div>
<svg class="r" style="left:1141px;top:446px" width="150" height="24"><rect x="1" y="1" width="148" height="22" rx="5" fill="#d0d0d0" stroke="#787878" stroke-width="2" stroke-dasharray="7 4.5" stroke-dashoffset="3"/></svg>
<div class="r cbtn" style="left:1141px;top:446px;width:150px;height:24px;"><span>U 0.52 SHGC 0.40 Dbl Ref-D Clr 6mm/13mm Air</span></div>
<div class="r" style="left:52px;top:509px;width:1474px;height:99px;background:#cecece;"></div>
<div class="r edit" style="left:57px;top:548px;width:197px;height:21px;"></div>
<div class="t" style="left:61px;top:552.73px;font-size:12.6px;line-height:15px;color:#000;">Apartment 1-4</div>
<div class="r chk" style="left:265px;top:522px;width:13px;height:13px;"></div>
<div class="r edit" style="left:289px;top:518px;width:197px;height:21px;"></div>
<div class="t" style="left:293px;top:522.73px;font-size:12.6px;line-height:15px;color:#000;">Face 41</div>
<div class="r edit" style="left:496px;top:518px;width:197px;height:21px;"></div>
<div class="t" style="left:500px;top:522.73px;font-size:12.6px;line-height:15px;color:#000;">Face 40</div>
<div class="r combo" style="left:703px;top:518px;width:198px;height:22px;"></div>
<div class="t" style="left:709px;top:523.73px;font-size:12.6px;line-height:15px;color:#000;">FixedWindow</div>
<svg class="r" style="left:887px;top:522px" width="9" height="14"><path d="M4.8 1.2L7.6 5.6H2Z M2 9H7.6L4.8 13.2Z" fill="#000"/></svg>
<div class="r edit" style="left:964px;top:518px;width:90px;height:21px;"></div>
<div class="t" style="left:968px;top:522.73px;font-size:12.6px;line-height:15px;color:#008000;">1.000000</div>
<svg class="r" style="left:1141px;top:516px" width="150" height="24"><rect x="1" y="1" width="148" height="22" rx="5" fill="#d0d0d0" stroke="#787878" stroke-width="2" stroke-dasharray="7 4.5" stroke-dashoffset="3"/></svg>
<div class="r cbtn" style="left:1141px;top:516px;width:150px;height:24px;"><span>U 0.52 SHGC 0.40 Dbl Ref-D Clr 6mm/13mm Air</span></div>
<div class="r chk" style="left:265px;top:552px;width:13px;height:13px;"></div>
<div class="r edit" style="left:289px;top:548px;width:197px;height:21px;"></div>
<div class="t" style="left:293px;top:552.73px;font-size:12.6px;line-height:15px;color:#000;">Face 39</div>
<div class="r edit" style="left:496px;top:548px;width:197px;height:21px;"></div>
<div class="t" style="left:500px;top:552.73px;font-size:12.6px;line-height:15px;color:#000;">Face 38</div>
<div class="r combo" style="left:703px;top:548px;width:198px;height:22px;"></div>
<div class="t" style="left:709px;top:553.73px;font-size:12.6px;line-height:15px;color:#000;">FixedWindow</div>
<svg class="r" style="left:887px;top:552px" width="9" height="14"><path d="M4.8 1.2L7.6 5.6H2Z M2 9H7.6L4.8 13.2Z" fill="#000"/></svg>
<div class="r edit" style="left:964px;top:548px;width:90px;height:21px;"></div>
<div class="t" style="left:968px;top:552.73px;font-size:12.6px;line-height:15px;color:#008000;">1.000000</div>
<svg class="r" style="left:1141px;top:546px" width="150" height="24"><rect x="1" y="1" width="148" height="22" rx="5" fill="#d0d0d0" stroke="#787878" stroke-width="2" stroke-dasharray="7 4.5" stroke-dashoffset="3"/></svg>
<div class="r cbtn" style="left:1141px;top:546px;width:150px;height:24px;"><span>U 0.52 SHGC 0.40 Dbl Ref-D Clr 6mm/13mm Air</span></div>
<div class="r" style="left:52px;top:609px;width:1474px;height:99px;background:#ececec;"></div>
<div class="r edit" style="left:57px;top:648px;width:197px;height:21px;"></div>
<div class="t" style="left:61px;top:652.73px;font-size:12.6px;line-height:15px;color:#000;">Apartment 1-5</div>
<div class="r chk" style="left:265px;top:622px;width:13px;height:13px;"></div>
<div class="r edit" style="left:289px;top:618px;width:197px;height:21px;"></div>
<div class="t" style="left:293px;top:622.73px;font-size:12.6px;line-height:15px;color:#000;">Face 48</div>
<div class="r edit" style="left:496px;top:618px;width:197px;height:21px;"></div>
<div class="t" style="left:500px;top:622.73px;font-size:12.6px;line-height:15px;color:#000;">Face 47</div>
<div class="r combo" style="left:703px;top:618px;width:198px;height:22px;"></div>
<div class="t" style="left:709px;top:623.73px;font-size:12.6px;line-height:15px;color:#000;">FixedWindow</div>
<svg class="r" style="left:887px;top:622px" width="9" height="14"><path d="M4.8 1.2L7.6 5.6H2Z M2 9H7.6L4.8 13.2Z" fill="#000"/></svg>
<div class="r edit" style="left:964px;top:618px;width:90px;height:21px;"></div>
<div class="t" style="left:968px;top:622.73px;font-size:12.6px;line-height:15px;color:#008000;">1.000000</div>
<svg class="r" style="left:1141px;top:616px" width="150" height="24"><rect x="1" y="1" width="148" height="22" rx="5" fill="#d0d0d0" stroke="#787878" stroke-width="2" stroke-dasharray="7 4.5" stroke-dashoffset="3"/></svg>
<div class="r cbtn" style="left:1141px;top:616px;width:150px;height:24px;"><span>U 0.52 SHGC 0.40 Dbl Ref-D Clr 6mm/13mm Air</span></div>
<div class="r chk" style="left:265px;top:652px;width:13px;height:13px;"></div>
<div class="r edit" style="left:289px;top:648px;width:197px;height:21px;"></div>
<div class="t" style="left:293px;top:652.73px;font-size:12.6px;line-height:15px;color:#000;">Face 46</div>
<div class="r edit" style="left:496px;top:648px;width:197px;height:21px;"></div>
<div class="t" style="left:500px;top:652.73px;font-size:12.6px;line-height:15px;color:#000;">Face 45</div>
<div class="r combo" style="left:703px;top:648px;width:198px;height:22px;"></div>
<div class="t" style="left:709px;top:653.73px;font-size:12.6px;line-height:15px;color:#000;">FixedWindow</div>
<svg class="r" style="left:887px;top:652px" width="9" height="14"><path d="M4.8 1.2L7.6 5.6H2Z M2 9H7.6L4.8 13.2Z" fill="#000"/></svg>
<div class="r edit" style="left:964px;top:648px;width:90px;height:21px;"></div>
<div class="t" style="left:968px;top:652.73px;font-size:12.6px;line-height:15px;color:#008000;">1.000000</div>
<svg class="r" style="left:1141px;top:646px" width="150" height="24"><rect x="1" y="1" width="148" height="22" rx="5" fill="#d0d0d0" stroke="#787878" stroke-width="2" stroke-dasharray="7 4.5" stroke-dashoffset="3"/></svg>
<div class="r cbtn" style="left:1141px;top:646px;width:150px;height:24px;"><span>U 0.52 SHGC 0.40 Dbl Ref-D Clr 6mm/13mm Air</span></div>
<div class="r" style="left:52px;top:709px;width:1474px;height:99px;background:#cecece;"></div>
<div class="r edit" style="left:57px;top:748px;width:197px;height:21px;"></div>
<div class="t" style="left:61px;top:752.73px;font-size:12.6px;line-height:15px;color:#000;">Apartment 2-1</div>
<div class="r chk" style="left:265px;top:722px;width:13px;height:13px;"></div>
<div class="r edit" style="left:289px;top:718px;width:197px;height:21px;"></div>
<div class="t" style="left:293px;top:722.73px;font-size:12.6px;line-height:15px;color:#000;">Face 56</div>
<div class="r edit" style="left:496px;top:718px;width:197px;height:21px;"></div>
<div class="t" style="left:500px;top:722.73px;font-size:12.6px;line-height:15px;color:#000;">Face 55</div>
<div class="r combo" style="left:703px;top:718px;width:198px;height:22px;"></div>
<div class="t" style="left:709px;top:723.73px;font-size:12.6px;line-height:15px;color:#000;">FixedWindow</div>
<svg class="r" style="left:887px;top:722px" width="9" height="14"><path d="M4.8 1.2L7.6 5.6H2Z M2 9H7.6L4.8 13.2Z" fill="#000"/></svg>
<div class="r edit" style="left:964px;top:718px;width:90px;height:21px;"></div>
<div class="t" style="left:968px;top:722.73px;font-size:12.6px;line-height:15px;color:#008000;">1.000000</div>
<svg class="r" style="left:1141px;top:716px" width="150" height="24"><rect x="1" y="1" width="148" height="22" rx="5" fill="#d0d0d0" stroke="#787878" stroke-width="2" stroke-dasharray="7 4.5" stroke-dashoffset="3"/></svg>
<div class="r cbtn" style="left:1141px;top:716px;width:150px;height:24px;"><span>U 0.52 SHGC 0.40 Dbl Ref-D Clr 6mm/13mm Air</span></div>
<div class="r chk" style="left:265px;top:752px;width:13px;height:13px;"></div>
<div class="r edit" style="left:289px;top:748px;width:197px;height:21px;"></div>
<div class="t" style="left:293px;top:752.73px;font-size:12.6px;line-height:15px;color:#000;">Face 58</div>
<div class="r edit" style="left:496px;top:748px;width:197px;height:21px;"></div>
<div class="t" style="left:500px;top:752.73px;font-size:12.6px;line-height:15px;color:#000;">Face 57</div>
<div class="r combo" style="left:703px;top:748px;width:198px;height:22px;"></div>
<div class="t" style="left:709px;top:753.73px;font-size:12.6px;line-height:15px;color:#000;">FixedWindow</div>
<svg class="r" style="left:887px;top:752px" width="9" height="14"><path d="M4.8 1.2L7.6 5.6H2Z M2 9H7.6L4.8 13.2Z" fill="#000"/></svg>
<div class="r edit" style="left:964px;top:748px;width:90px;height:21px;"></div>
<div class="t" style="left:968px;top:752.73px;font-size:12.6px;line-height:15px;color:#008000;">1.000000</div>
<svg class="r" style="left:1141px;top:746px" width="150" height="24"><rect x="1" y="1" width="148" height="22" rx="5" fill="#d0d0d0" stroke="#787878" stroke-width="2" stroke-dasharray="7 4.5" stroke-dashoffset="3"/></svg>
<div class="r cbtn" style="left:1141px;top:746px;width:150px;height:24px;"><span>U 0.52 SHGC 0.40 Dbl Ref-D Clr 6mm/13mm Air</span></div>
<div class="r" style="left:52px;top:809px;width:1474px;height:69px;background:#ececec;"></div>
<div class="r edit" style="left:57px;top:833px;width:197px;height:21px;"></div>
<div class="t" style="left:61px;top:837.73px;font-size:12.6px;line-height:15px;color:#000;">Apartment 2-2</div>
<div class="r chk" style="left:265px;top:822px;width:13px;height:13px;"></div>
<div class="r edit" style="left:289px;top:818px;width:197px;height:21px;"></div>
<div class="t" style="left:293px;top:822.73px;font-size:12.6px;line-height:15px;color:#000;">Face 65</div>
<div class="r edit" style="left:496px;top:818px;width:197px;height:21px;"></div>
<div class="t" style="left:500px;top:822.73px;font-size:12.6px;line-height:15px;color:#000;">Face 64</div>
<div class="r combo" style="left:703px;top:818px;width:198px;height:22px;"></div>
<div class="t" style="left:709px;top:823.73px;font-size:12.6px;line-height:15px;color:#000;">FixedWindow</div>
<svg class="r" style="left:887px;top:822px" width="9" height="14"><path d="M4.8 1.2L7.6 5.6H2Z M2 9H7.6L4.8 13.2Z" fill="#000"/></svg>
<div class="r edit" style="left:964px;top:818px;width:90px;height:21px;"></div>
<div class="t" style="left:968px;top:822.73px;font-size:12.6px;line-height:15px;color:#008000;">1.000000</div>
<svg class="r" style="left:1141px;top:816px" width="150" height="24"><rect x="1" y="1" width="148" height="22" rx="5" fill="#d0d0d0" stroke="#787878" stroke-width="2" stroke-dasharray="7 4.5" stroke-dashoffset="3"/></svg>
<div class="r cbtn" style="left:1141px;top:816px;width:150px;height:24px;"><span>U 0.52 SHGC 0.40 Dbl Ref-D Clr 6mm/13mm Air</span></div>
<div class="r" style="left:52px;top:879px;width:1474px;height:74px;background:#cecece;"></div>
<div class="r edit" style="left:57px;top:918px;width:197px;height:21px;"></div>
<div class="t" style="left:61px;top:922.73px;font-size:12.6px;line-height:15px;color:#000;">Apartment 2-3</div>
<div class="r chk" style="left:265px;top:892px;width:13px;height:13px;"></div>
<div class="r edit" style="left:289px;top:888px;width:197px;height:21px;"></div>
<div class="t" style="left:293px;top:892.73px;font-size:12.6px;line-height:15px;color:#000;">Face 73</div>
<div class="r edit" style="left:496px;top:888px;width:197px;height:21px;"></div>
<div class="t" style="left:500px;top:892.73px;font-size:12.6px;line-height:15px;color:#000;">Face 72</div>
<div class="r combo" style="left:703px;top:888px;width:198px;height:22px;"></div>
<div class="t" style="left:709px;top:893.73px;font-size:12.6px;line-height:15px;color:#000;">FixedWindow</div>
<svg class="r" style="left:887px;top:892px" width="9" height="14"><path d="M4.8 1.2L7.6 5.6H2Z M2 9H7.6L4.8 13.2Z" fill="#000"/></svg>
<div class="r edit" style="left:964px;top:888px;width:90px;height:21px;"></div>
<div class="t" style="left:968px;top:892.73px;font-size:12.6px;line-height:15px;color:#008000;">1.000000</div>
<svg class="r" style="left:1141px;top:886px" width="150" height="24"><rect x="1" y="1" width="148" height="22" rx="5" fill="#d0d0d0" stroke="#787878" stroke-width="2" stroke-dasharray="7 4.5" stroke-dashoffset="3"/></svg>
<div class="r cbtn" style="left:1141px;top:886px;width:150px;height:24px;"><span>U 0.52 SHGC 0.40 Dbl Ref-D Clr 6mm/13mm Air</span></div>
<div class="r chk" style="left:265px;top:922px;width:13px;height:13px;"></div>
<div class="r edit" style="left:289px;top:918px;width:197px;height:21px;"></div>
<div class="t" style="left:293px;top:922.73px;font-size:12.6px;line-height:15px;color:#000;">Face 69</div>
<div class="r edit" style="left:496px;top:918px;width:197px;height:21px;"></div>
<div class="t" style="left:500px;top:922.73px;font-size:12.6px;line-height:15px;color:#000;">Face 68</div>
<div class="r combo" style="left:703px;top:918px;width:198px;height:22px;"></div>
<div class="t" style="left:709px;top:923.73px;font-size:12.6px;line-height:15px;color:#000;">FixedWindow</div>
<svg class="r" style="left:887px;top:922px" width="9" height="14"><path d="M4.8 1.2L7.6 5.6H2Z M2 9H7.6L4.8 13.2Z" fill="#000"/></svg>
<div class="r edit" style="left:964px;top:918px;width:90px;height:21px;"></div>
<div class="t" style="left:968px;top:922.73px;font-size:12.6px;line-height:15px;color:#008000;">1.000000</div>
<svg class="r" style="left:1141px;top:916px" width="150" height="24"><rect x="1" y="1" width="148" height="22" rx="5" fill="#d0d0d0" stroke="#787878" stroke-width="2" stroke-dasharray="7 4.5" stroke-dashoffset="3"/></svg>
<div class="r cbtn" style="left:1141px;top:916px;width:150px;height:24px;"><span>U 0.52 SHGC 0.40 Dbl Ref-D Clr 6mm/13mm Air</span></div>
<div class="r" style="left:51px;top:156px;width:1476px;height:1px;background:#000;"></div>
<div class="r" style="left:51px;top:238px;width:1476px;height:1px;background:#000;"></div>
<div class="r" style="left:51px;top:338px;width:1476px;height:1px;background:#000;"></div>
<div class="r" style="left:51px;top:408px;width:1476px;height:1px;background:#000;"></div>
<div class="r" style="left:51px;top:508px;width:1476px;height:1px;background:#000;"></div>
<div class="r" style="left:51px;top:608px;width:1476px;height:1px;background:#000;"></div>
<div class="r" style="left:51px;top:708px;width:1476px;height:1px;background:#000;"></div>
<div class="r" style="left:51px;top:808px;width:1476px;height:1px;background:#000;"></div>
<div class="r" style="left:51px;top:878px;width:1476px;height:1px;background:#000;"></div>
<div class="r" style="left:51px;top:953px;width:1476px;height:1px;background:#000;"></div>
<div class="r" style="left:51px;top:156px;width:1px;height:797px;background:#000;"></div>
<div class="r" style="left:258px;top:156px;width:1px;height:797px;background:#000;"></div>
<div class="r" style="left:283px;top:156px;width:1px;height:797px;background:#000;"></div>
<div class="r" style="left:490px;top:156px;width:1px;height:797px;background:#000;"></div>
<div class="r" style="left:697px;top:156px;width:1px;height:797px;background:#000;"></div>
<div class="r" style="left:905px;top:156px;width:1px;height:797px;background:#000;"></div>
<div class="r" style="left:1112px;top:156px;width:1px;height:797px;background:#000;"></div>
<div class="r" style="left:1319px;top:156px;width:1px;height:797px;background:#000;"></div>
<div class="r" style="left:1526px;top:156px;width:1px;height:797px;background:#000;"></div>
<div class="r" style="left:1527px;top:46px;width:17px;height:907px;background:#f0f0f0;"></div>
<div class="r sbbtn" style="left:1527px;top:47px;width:17px;height:16px;"></div>
<svg class="r" style="left:1531px;top:52px" width="9" height="5"><path d="M1 4.5L4.5 0.5L8 4.5Z" fill="#000"/></svg>
<div class="r sbbtn" style="left:1527px;top:63px;width:17px;height:384px;"></div>
<div class="r dith" style="left:1527px;top:447px;width:17px;height:490px;"></div>
<div class="r sbbtn" style="left:1527px;top:937px;width:17px;height:16px;"></div>
<svg class="r" style="left:1531px;top:942px" width="9" height="5"><path d="M1 0.5L4.5 4.5L8 0.5Z" fill="#000"/></svg>
<div class="r" style="left:51px;top:954px;width:1493px;height:43px;background:#808080;"></div>
<div class="r" style="left:1544px;top:20px;width:15px;height:977px;background:#2b3033;"></div>
<div class="r" style="left:1920px;top:20px;width:3px;height:977px;background:#f0f0f0;"></div>
<div class="r" style="left:1548px;top:493px;width:6px;height:6px;border-radius:50%;background:#c8c8c8;"></div>
<div class="r" style="left:1548px;top:505px;width:6px;height:6px;border-radius:50%;background:#c8c8c8;"></div>
<div class="r" style="left:1548px;top:517px;width:6px;height:6px;border-radius:50%;background:#c8c8c8;"></div>
<div class="r" style="left:1559px;top:20px;width:361px;height:31px;background:#2b3033;"></div>
<div class="r" style="left:1559px;top:20px;width:134px;height:26px;background:#808080;"></div>
<div class="r" style="left:1633px;top:20px;width:1px;height:26px;background:#1a1a1a;"></div>
<div class="r" style="left:1559px;top:46px;width:134px;height:1px;background:#1a1a1a;"></div>
<div class="r" style="left:1692px;top:20px;width:1px;height:27px;background:#1a1a1a;"></div>
<div class="r" style="left:1693px;top:20px;width:42px;height:31px;background:#94b4e0;"></div>
<div class="r" style="left:1559px;top:47px;width:176px;height:4px;background:#94b4e0;"></div>
<div class="t" style="left:1569px;top:29.73px;font-size:12.6px;line-height:15px;color:#fff;">My Model</div>
<div class="t" style="left:1644px;top:29.73px;font-size:12.6px;line-height:15px;color:#fff;">Library</div>
<div class="t" style="left:1704px;top:29.73px;font-size:12.6px;line-height:15px;color:#fff;">Edit</div>
<div class="r" style="left:1559px;top:51px;width:361px;height:1px;background:#111;"></div>
<div class="r" style="left:1559px;top:52px;width:361px;height:28px;background:linear-gradient(#9cb9e2,#4d7eb4);"></div>
<div class="r" style="left:1559px;top:80px;width:361px;height:1px;background:#111;"></div>
<div class="r" style="left:1559px;top:81px;width:344px;height:916px;background:#e6e6e6;"></div>
<div class="r" style="left:1559px;top:81px;width:344px;height:31px;background:#808080;"></div>
<div class="t" style="left:1562px;top:89.92px;font-size:13.5px;line-height:16px;color:#000;font-weight:bold;">OS:Construction</div>
<div class="r" style="left:1559px;top:111px;width:112px;height:1px;background:#1a1a1a;"></div>
<div class="t" style="left:1568px;top:122.73px;font-size:12.6px;line-height:15px;color:#000;">Name</div>
<div class="r pedit" style="left:1568px;top:143px;width:326px;height:22px;"></div>
<div class="t" style="left:1572px;top:147.73px;font-size:12.6px;line-height:15px;color:#808080;">U 0.52 SHGC 0.40 Dbl Ref-D Clr 6mm/13mm Air</div>
<div class="r" style="left:1559px;top:174px;width:344px;height:1px;background:#a0a0a0;"></div>
<div class="t" style="left:1568px;top:185.73px;font-size:12.6px;line-height:15px;color:#000;">Surface Rendering Name</div>
<div class="r pedit" style="left:1568px;top:206px;width:326px;height:22px;"></div>
<div class="t" style="left:1572px;top:210.73px;font-size:12.6px;line-height:15px;color:#808080;">Rendering Color 21</div>
<div class="r" style="left:1559px;top:237px;width:344px;height:1px;background:#a0a0a0;"></div>
<div class="t" style="left:1568px;top:248.73px;font-size:12.6px;line-height:15px;color:#000;">Layer</div>
<div class="r pedit" style="left:1568px;top:269px;width:326px;height:22px;"></div>
<div class="t" style="left:1572px;top:273.73px;font-size:12.6px;line-height:15px;color:#808080;">REF D CLEAR 6MM</div>
<div class="r" style="left:1559px;top:300px;width:344px;height:1px;background:#a0a0a0;"></div>
<div class="t" style="left:1568px;top:311.73px;font-size:12.6px;line-height:15px;color:#000;">Layer</div>
<div class="r pedit" style="left:1568px;top:332px;width:326px;height:22px;"></div>
<div class="t" style="left:1572px;top:336.73px;font-size:12.6px;line-height:15px;color:#808080;">AIR 13MM</div>
<div class="r" style="left:1559px;top:363px;width:344px;height:1px;background:#a0a0a0;"></div>
<div class="t" style="left:1568px;top:374.73px;font-size:12.6px;line-height:15px;color:#000;">Layer</div>
<div class="r pedit" style="left:1568px;top:395px;width:326px;height:22px;"></div>
<div class="t" style="left:1572px;top:399.73px;font-size:12.6px;line-height:15px;color:#808080;">CLEAR 6MM</div>
<div class="r" style="left:1559px;top:426px;width:344px;height:1px;background:#a0a0a0;"></div>
<div class="t" style="left:1569px;top:428.73px;font-size:12.6px;line-height:15px;color:#000;">Add/Remove Extensible Groups</div>
<svg class="r" style="left:1779px;top:428px" width="14" height="14"><circle cx="7" cy="7" r="5.5" fill="#35a035" stroke="#e8f4e8" stroke-width="0.8"/><path d="M7 4V10M4 7H10" stroke="#fff" stroke-width="2"/></svg>
<svg class="r" style="left:1857px;top:428px" width="14" height="14"><circle cx="7" cy="7" r="5.5" fill="#d42828" stroke="#f4e0e0" stroke-width="0.8"/><path d="M4 7H10" stroke="#fff" stroke-width="2.2"/></svg>
<div class="r" style="left:1559px;top:443px;width:344px;height:32px;background:#808080;"></div>
<div class="t" style="left:1562px;top:451.92px;font-size:13.5px;line-height:16px;color:#000;font-weight:bold;">OS:StandardsInformation:Construction</div>
<div class="r" style="left:1559px;top:474px;width:260px;height:1px;background:#1a1a1a;"></div>
<div class="t" style="left:1568px;top:485.73px;font-size:12.6px;line-height:15px;color:#000;">Construction Name</div>
<div class="r pedit" style="left:1568px;top:506px;width:326px;height:22px;"></div>
<div class="t" style="left:1572px;top:510.73px;font-size:12.6px;line-height:15px;color:#808080;">U 0.52 SHGC 0.40 Dbl Ref-D Clr 6mm/13mm Air</div>
<div class="r" style="left:1559px;top:537px;width:344px;height:1px;background:#a0a0a0;"></div>
<div class="t" style="left:1568px;top:548.73px;font-size:12.6px;line-height:15px;color:#000;">Intended Surface Type</div>
<div class="r pedit" style="left:1568px;top:569px;width:326px;height:22px;"></div>
<div class="t" style="left:1572px;top:573.73px;font-size:12.6px;line-height:15px;color:#808080;">ExteriorWindow</div>
<div class="r" style="left:1559px;top:600px;width:344px;height:1px;background:#a0a0a0;"></div>
<div class="t" style="left:1568px;top:611.73px;font-size:12.6px;line-height:15px;color:#000;">Standards Construction Type</div>
<div class="r pedit" style="left:1568px;top:632px;width:326px;height:22px;"></div>
<div class="t" style="left:1572px;top:636.73px;font-size:12.6px;line-height:15px;color:#808080;">Metal framing (all other)</div>
<div class="r" style="left:1559px;top:663px;width:344px;height:1px;background:#a0a0a0;"></div>
<div class="t" style="left:1568px;top:674.73px;font-size:12.6px;line-height:15px;color:#000;">Perturbable Layer</div>
<div class="r pedit" style="left:1568px;top:695px;width:314px;height:22px;"></div>
<div class="r" style="left:1559px;top:726px;width:344px;height:1px;background:#a0a0a0;"></div>
<div class="t" style="left:1568px;top:737.73px;font-size:12.6px;line-height:15px;color:#000;">Perturbable Layer Type</div>
<div class="r pedit" style="left:1568px;top:758px;width:326px;height:22px;"></div>
<div class="t" style="left:1572px;top:762.73px;font-size:12.6px;line-height:15px;color:#808080;">Not Applicable</div>
<div class="r" style="left:1559px;top:789px;width:344px;height:1px;background:#a0a0a0;"></div>
<div class="t" style="left:1568px;top:800.73px;font-size:12.6px;line-height:15px;color:#000;">Other Perturbable Layer Type</div>
<div class="r pedit" style="left:1568px;top:821px;width:326px;height:22px;"></div>
<div class="r" style="left:1559px;top:852px;width:344px;height:1px;background:#a0a0a0;"></div>
<div class="t" style="left:1568px;top:863.73px;font-size:12.6px;line-height:15px;color:#000;">Construction Standard</div>
<div class="r pedit" style="left:1568px;top:884px;width:326px;height:22px;"></div>
<div class="r" style="left:1559px;top:915px;width:344px;height:1px;background:#a0a0a0;"></div>
<div class="t" style="left:1568px;top:926.73px;font-size:12.6px;line-height:15px;color:#000;">Construction Standard Source</div>
<div class="r pedit" style="left:1568px;top:947px;width:326px;height:22px;"></div>
<div class="r" style="left:1559px;top:978px;width:344px;height:1px;background:#a0a0a0;"></div>
<div class="t" style="left:1568px;top:989.73px;font-size:12.6px;line-height:15px;color:#000;">Fenestration Type</div>
<div class="r pedit" style="left:1568px;top:1010px;width:326px;height:22px;"></div>
<div class="r" style="left:1559px;top:1041px;width:344px;height:1px;background:#a0a0a0;"></div>
<div class="r" style="left:0px;top:997px;width:1920px;height:1px;background:#000;"></div>
<div class="r" style="left:0px;top:998px;width:1920px;height:19px;background:#a0a0a0;"></div>
<div class="r" style="left:1920px;top:20px;width:3px;height:997px;background:#fafafa;"></div>
<div class="r dith" style="left:1903px;top:81px;width:17px;height:916px;"></div>
<div class="r sbbtn" style="left:1903px;top:81px;width:17px;height:16px;"></div>
<svg class="r" style="left:1907px;top:86px" width="9" height="5"><path d="M1 4.5L4.5 0.5L8 4.5Z" fill="#000"/></svg>
<div class="r sbbtn" style="left:1903px;top:97px;width:17px;height:577px;"></div>
<div class="r sbbtn" style="left:1903px;top:981px;width:17px;height:16px;"></div>
<svg class="r" style="left:1907px;top:986px" width="9" height="5"><path d="M1 0.5L4.5 4.5L8 0.5Z" fill="#000"/></svg>
<svg class="r" style="left:1559px;top:52px" width="90" height="28">
<defs><linearGradient id="gbg" x1="0" y1="0" x2="0" y2="1"><stop offset="0" stop-color="#7f9dc6"/><stop offset="1" stop-color="#4a77ab"/></linearGradient>
<linearGradient id="bbg" x1="0" y1="0" x2="0" y2="1"><stop offset="0" stop-color="#b4c9e6"/><stop offset="1" stop-color="#8eaed8"/></linearGradient>
<linearGradient id="gearw" gradientUnits="userSpaceOnUse" x1="0" y1="-11" x2="0" y2="11"><stop offset="0.5" stop-color="#ffffff"/><stop offset="0.5" stop-color="#dce6f1"/></linearGradient>
<radialGradient id="bulb" cx="45%" cy="40%" r="60%"><stop offset="0" stop-color="#ffffff"/><stop offset="0.45" stop-color="#f4f6ff"/><stop offset="0.75" stop-color="#8c9ee0"/><stop offset="1" stop-color="#e6ecfa"/></radialGradient></defs>
<rect x="0" y="0" width="29" height="28" fill="url(#gbg)" opacity="0.55"/>
<rect x="29" y="1.5" width="58" height="25" fill="url(#bbg)" opacity="0.75"/>
<g transform="translate(14.5,14)" fill="url(#gearw)"><circle r="7.6"/><rect x="-2.3" y="-10.2" width="4.6" height="5" rx="1.2" transform="rotate(0)"/><rect x="-2.3" y="-10.2" width="4.6" height="5" rx="1.2" transform="rotate(45)"/><rect x="-2.3" y="-10.2" width="4.6" height="5" rx="1.2" transform="rotate(90)"/><rect x="-2.3" y="-10.2" width="4.6" height="5" rx="1.2" transform="rotate(135)"/><rect x="-2.3" y="-10.2" width="4.6" height="5" rx="1.2" transform="rotate(180)"/><rect x="-2.3" y="-10.2" width="4.6" height="5" rx="1.2" transform="rotate(225)"/><rect x="-2.3" y="-10.2" width="4.6" height="5" rx="1.2" transform="rotate(270)"/><rect x="-2.3" y="-10.2" width="4.6" height="5" rx="1.2" transform="rotate(315)"/><circle r="2.6" fill="#4d5d75"/></g>
<g transform="translate(43.5,16.3)"><path d="M-13.5 0H-8.5M8.5 0H13.5M0 -12V-8.5M-9 -9L-6.5 -6.5M9 -9L6.5 -6.5" stroke="#3a5ea6" stroke-width="1.3"/><circle r="8.4" fill="#f2f5fd" stroke="#3a5ea6" stroke-width="1.4"/><circle cx="0.8" cy="1.3" r="6" fill="#8d9fe0"/><circle cx="-0.6" cy="-0.9" r="4.8" fill="#ffffff"/></g>
<g transform="translate(72.5,16.3)"><path d="M-13.5 0H-8.5M8.5 0H13.5M0 -12V-8.5M-9 -9L-6.5 -6.5M9 -9L6.5 -6.5" stroke="#3a5ea6" stroke-width="1.3"/><circle r="8.4" fill="#f2f5fd" stroke="#3a5ea6" stroke-width="1.4"/><circle cx="0.8" cy="1.3" r="6" fill="#8d9fe0"/><circle cx="-0.6" cy="-0.9" r="4.8" fill="#ffffff"/></g>
</svg>
<svg class="r" style="left:1895px;top:56px" width="20" height="20"><circle cx="10" cy="10" r="9.5" fill="#000"/><path d="M6 6L14 14M14 6L6 14" stroke="#fff" stroke-width="2.6" stroke-linecap="round"/></svg>
<svg class="r" style="left:60px;top:962px" width="86" height="26">
<defs><radialGradient id="gg" cx="50%" cy="30%" r="70%"><stop offset="0" stop-color="#9ad58f"/><stop offset="0.6" stop-color="#3d9c3d"/><stop offset="1" stop-color="#1d6d2a"/></radialGradient>
<radialGradient id="gr" cx="50%" cy="30%" r="70%"><stop offset="0" stop-color="#b5b5b5"/><stop offset="0.6" stop-color="#7a7a7a"/><stop offset="1" stop-color="#555"/></radialGradient></defs>
<circle cx="14" cy="13" r="11" fill="url(#gg)" stroke="#5fd36f" stroke-width="1"/>
<path d="M14 7.5V18.5M8.5 13H19.5" stroke="#fff" stroke-width="3.4"/>
<circle cx="43" cy="13" r="10.5" fill="url(#gr)" stroke="#555" stroke-width="0.8"/>
<text x="43" y="17.5" font-family="Liberation Sans" font-weight="bold" font-size="12" fill="#fff" text-anchor="middle">X2</text>
<circle cx="72" cy="13" r="10.5" fill="url(#gr)" stroke="#555" stroke-width="0.8"/>
<path d="M67.5 8.5L76.5 17.5M76.5 8.5L67.5 17.5" stroke="#fff" stroke-width="3.2"/>
</svg>
<svg class="r" style="left:1510px;top:960px" width="24" height="28">
<defs><linearGradient id="tg" x1="0" y1="0" x2="0" y2="1"><stop offset="0" stop-color="#a8a8a8"/><stop offset="1" stop-color="#5e5e5e"/></linearGradient></defs>
<path d="M2.5 5.5L21.5 5.5L19.5 25Q12 27.5 4.5 25Z" fill="url(#tg)"/>
<ellipse cx="12" cy="5.2" rx="9.6" ry="2.6" fill="#3c3c3c" stroke="#b4b4b4" stroke-width="1"/>
<g transform="translate(12,18.5) scale(0.85) translate(-12,-17)"><path d="M9.6 12.6L12 10L14.4 12.6M16.4 14.6L18.4 20L14.8 21.2M9.2 21.2L5.6 20L7.6 14.6" stroke="#f4f4f4" stroke-width="3.4" fill="none" stroke-linecap="round" stroke-linejoin="round"/></g>
</svg>
</body></html>
